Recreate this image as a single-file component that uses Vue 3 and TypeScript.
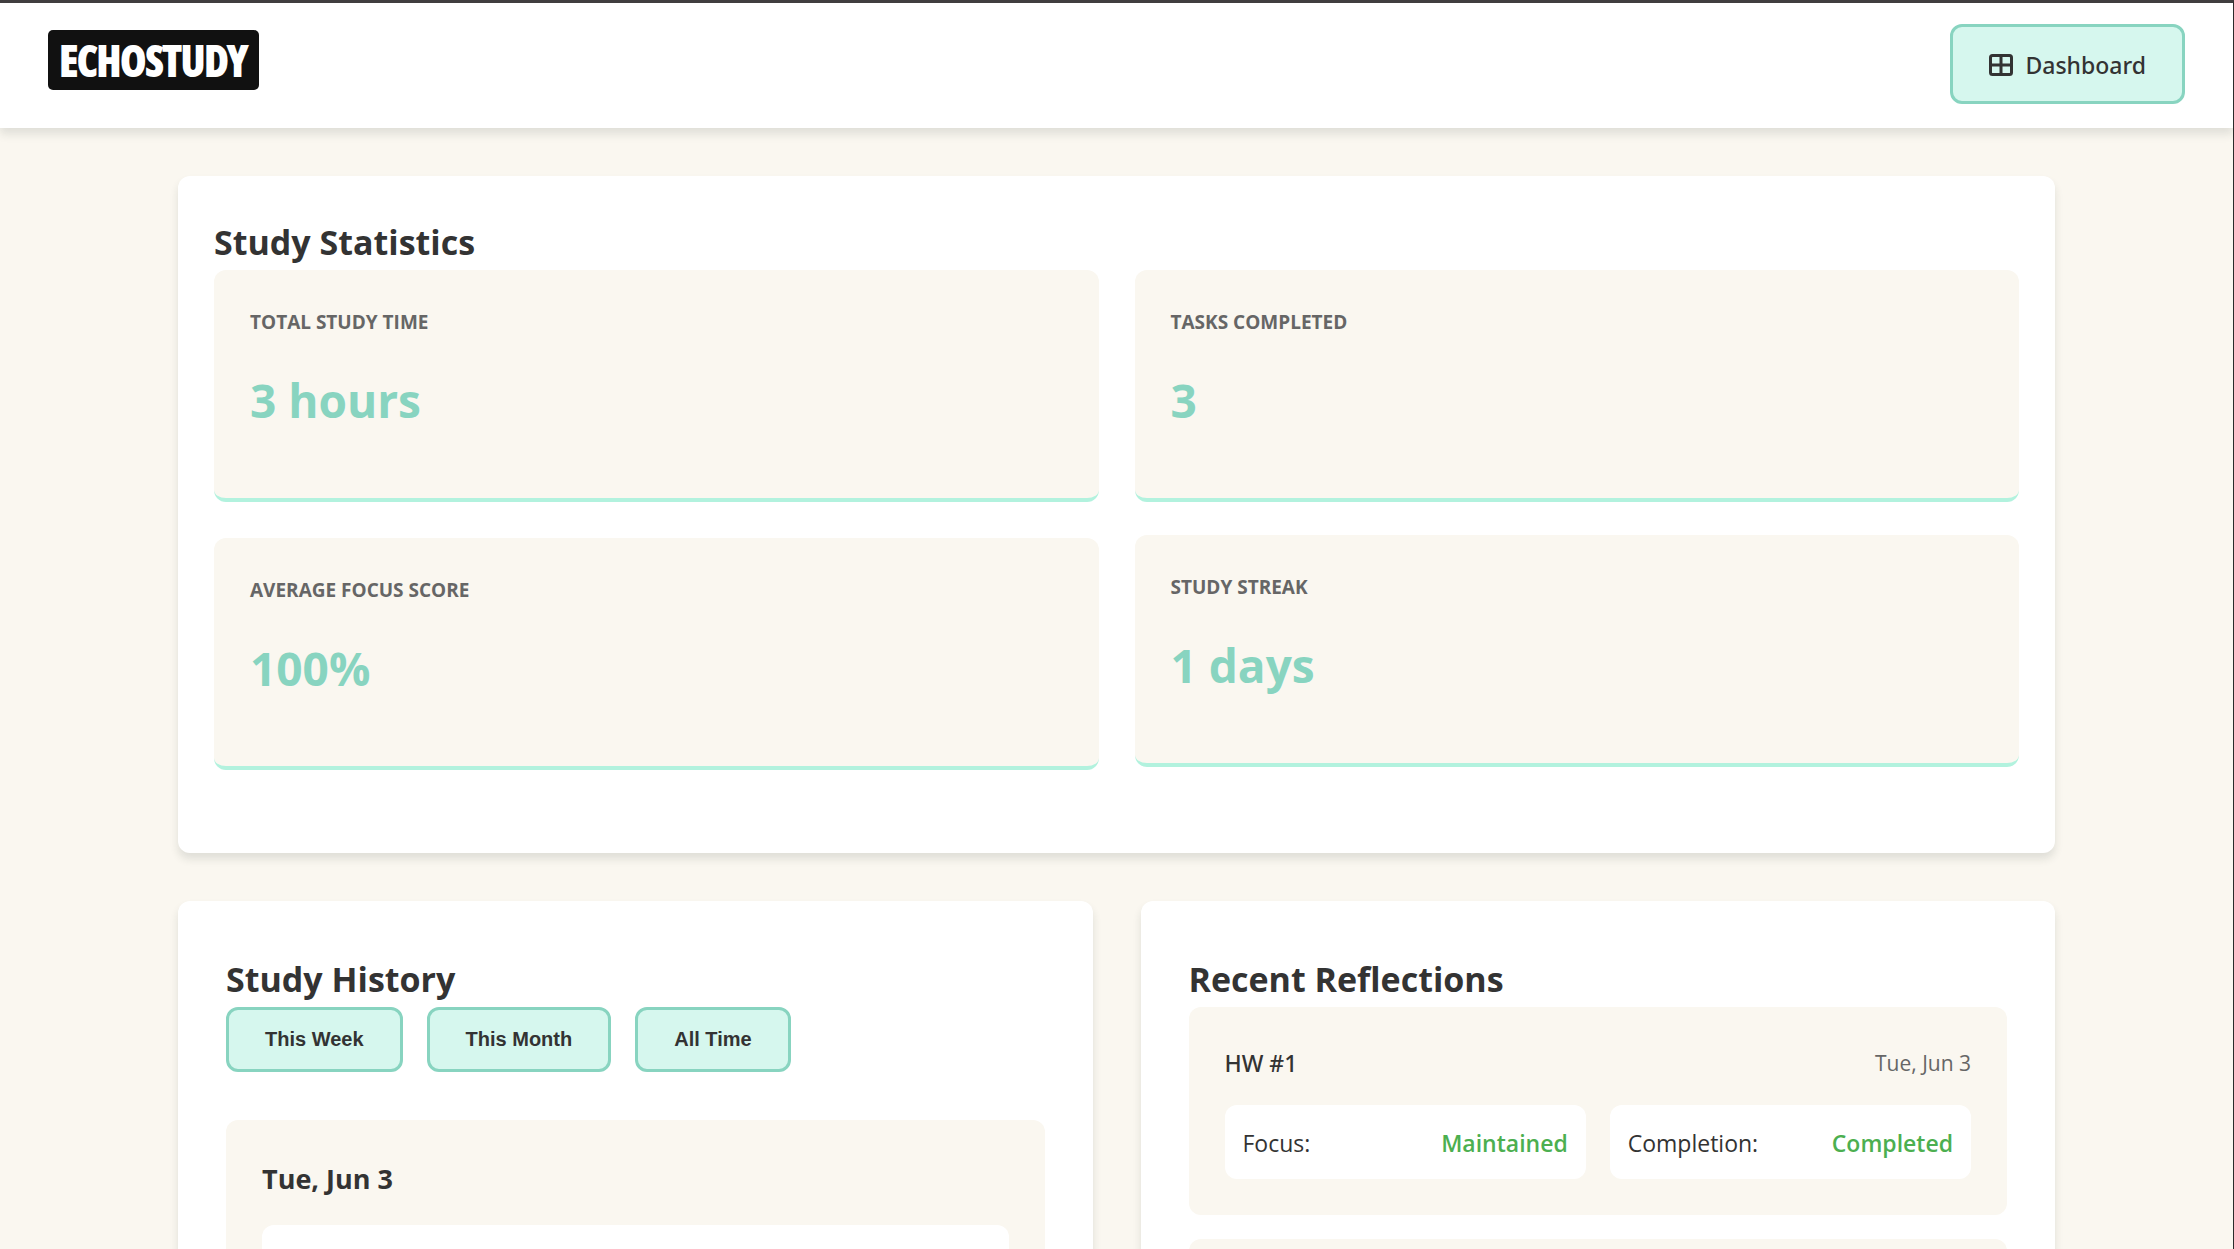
<script setup lang="ts">
interface Stat {
  label: string
  value: string
}

const statColumns: Stat[][] = [
  [
    { label: 'Total Study Time', value: '3 hours' },
    { label: 'Average Focus Score', value: '100%' },
  ],
  [
    { label: 'Tasks Completed', value: '3' },
    { label: 'Study Streak', value: '1 days' },
  ],
]

const ranges: string[] = ['This Week', 'This Month', 'All Time']
</script>

<template>
  <div class="app">
    <header class="topbar">
      <a class="logo" href="#">ECHOSTUDY</a>
      <a class="nav-button" href="#dashboard">
        <svg class="nav-icon" viewBox="0 0 24 22" aria-hidden="true">
          <rect x="1.5" y="1.5" width="21" height="19" rx="2" />
          <path d="M12 1.5v19M1.5 11h21" />
        </svg>
        Dashboard
      </a>
    </header>

    <main class="content">
      <section class="card stats">
        <h2>Study Statistics</h2>
        <div class="stats-columns">
          <div v-for="(column, i) in statColumns" :key="i" class="stats-column">
            <article v-for="stat in column" :key="stat.label" class="stat">
              <h3>{{ stat.label }}</h3>
              <p>{{ stat.value }}</p>
            </article>
          </div>
        </div>
      </section>

      <div class="lower">
        <section class="card panel">
          <h2>Study History</h2>
          <div class="filters">
            <button v-for="range in ranges" :key="range" type="button">{{ range }}</button>
          </div>
          <article class="day">
            <h3>Tue, Jun 3</h3>
            <div class="session"></div>
          </article>
        </section>

        <section class="card panel">
          <h2>Recent Reflections</h2>
          <div class="reflections">
            <article class="reflection">
              <div class="reflection-head">
                <span class="task">HW #1</span>
                <time>Tue, Jun 3</time>
              </div>
              <div class="results">
                <div class="result"><span>Focus:</span><strong>Maintained</strong></div>
                <div class="result"><span>Completion:</span><strong>Completed</strong></div>
              </div>
            </article>
            <article class="reflection next"></article>
          </div>
        </section>
      </div>
    </main>
  </div>
</template>

<style>
body {
  margin: 0;
  background: #faf7f0;
}
</style>

<style scoped>
* {
  box-sizing: border-box;
}

.app {
  height: 100vh;
  overflow-y: auto;
  scrollbar-width: none;
  border-top: 3px solid #403e3f;
  border-right: 1px solid #2b2b2b;
  background: #faf7f0;
  color: #333;
  font-family: 'Open Sans', 'Noto Sans', sans-serif;
  font-size: 23px;
  line-height: 38px;
}

h2,
h3,
p {
  margin: 0;
}

.topbar {
  display: flex;
  align-items: center;
  justify-content: space-between;
  padding: 21px 48px 24px;
  background: #fff;
  box-shadow: 0 6px 9px rgba(30, 50, 40, 0.12);
}

.logo {
  width: 211px;
  height: 60px;
  margin-bottom: 8px;
  border-radius: 5px;
  background: #111;
  color: #fff;
  font-family: 'Liberation Sans Narrow', 'Open Sans Condensed', 'Liberation Sans', sans-serif;
  font-size: 42px;
  font-weight: 700;
  line-height: 60px;
  text-align: center;
  text-decoration: none;
  -webkit-text-stroke: 2px #fff;
}

.nav-button {
  display: flex;
  align-items: center;
  gap: 12px;
  padding: 19px 36px 17px;
  border: 3px solid #88d4c0;
  border-radius: 12px;
  background: #d6f7ee;
  color: #333;
  font-family: 'Noto Sans', sans-serif;
  font-weight: 500;
  text-decoration: none;
}

.nav-icon {
  width: 24px;
  height: 22px;
  fill: none;
  stroke: #333;
  stroke-width: 3;
}

.content {
  max-width: 1877px;
  margin: 0 auto;
  padding: 48px 0;
}

.card {
  border-radius: 12px;
  background: #fff;
  box-shadow: 0 6px 9px rgba(30, 50, 40, 0.12);
}

h2 {
  padding-top: 2px;
  font-size: 34px;
  font-weight: 700;
  line-height: 56px;
}

.stats {
  padding: 36px 36px 83px;
}

.stats-columns {
  display: flex;
  align-items: flex-start;
  gap: 36px;
}

.stats-column {
  display: flex;
  flex: 1;
  flex-direction: column;
  gap: 36px;
}

.stats-column:last-child {
  gap: 33px;
}

.stat {
  padding: 36px 36px 60px;
  border-bottom: 4px solid #b2f2de;
  border-radius: 12px;
  background: #faf7f0;
}

.stat h3 {
  margin-bottom: 24px;
  color: #666;
  font-size: 19px;
  font-weight: 700;
  line-height: 32px;
  text-transform: uppercase;
}

.stat p {
  color: #88d4c0;
  font-size: 46px;
  font-weight: 700;
  line-height: 76px;
}

.lower {
  display: flex;
  align-items: flex-start;
  gap: 48px;
  margin-top: 48px;
}

.panel {
  flex: 1;
  padding: 48px;
}

.filters {
  display: flex;
  gap: 24px;
  margin-bottom: 48px;
}

.filters button {
  padding: 18px 36px;
  border: 3px solid #88d4c0;
  border-radius: 12px;
  background: #d6f7ee;
  color: #333;
  font-family: 'Liberation Sans', Arial, sans-serif;
  font-size: 20px;
  font-weight: 600;
  line-height: 23px;
}

.day,
.reflection {
  padding: 36px;
  border-radius: 12px;
  background: #faf7f0;
}

.day h3 {
  margin-bottom: 24px;
  font-size: 27px;
  font-weight: 700;
  line-height: 45px;
}

.session {
  min-height: 96px;
  border-radius: 12px;
  background: #fff;
}

.reflections {
  display: flex;
  flex-direction: column;
  gap: 24px;
}

.reflection-head {
  display: flex;
  justify-content: space-between;
  padding-top: 1px;
  margin-bottom: 23px;
}

.task {
  font-family: 'Noto Sans', sans-serif;
  font-weight: 500;
}

time {
  color: #666;
  font-size: 21px;
}

.results {
  display: flex;
  gap: 24px;
}

.result {
  display: flex;
  flex: 1;
  justify-content: space-between;
  padding: 19px 18px 17px;
  border-radius: 12px;
  background: #fff;
}

.result strong {
  color: #4caf50;
  font-weight: 600;
}

.next {
  min-height: 208px;
}
</style>
